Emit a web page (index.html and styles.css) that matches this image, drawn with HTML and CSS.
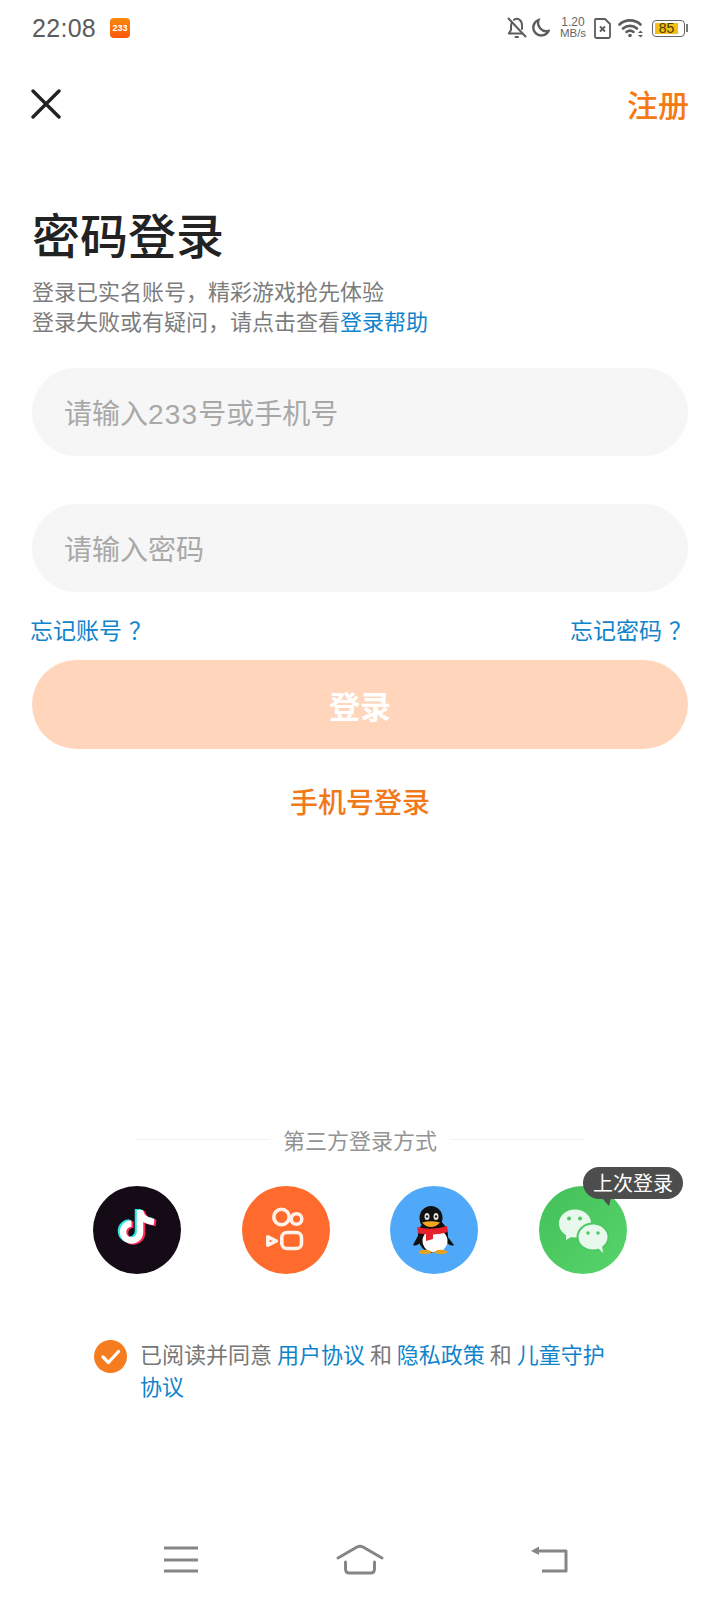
FILE: index.html
```html
<!DOCTYPE html>
<html lang="zh-CN">
<head>
    <meta charset="UTF-8">
    <meta name="viewport" content="width=device-width, initial-scale=1.0">
    <title>密码登录</title>
    <link rel="stylesheet" href="styles.css">
</head>
<body>
<div class="page">
    <!-- status bar -->
    <div class="status">
        <span class="time">22:08</span>
        <span class="app-badge">233</span>
        <div class="status-icons">
            <svg class="ic" width="20" height="22" viewBox="0 0 20 22" fill="none" stroke="#5c5c5c" stroke-width="2" stroke-linecap="round" stroke-linejoin="round">
                <path d="M5 5.500C4.200 6.800 4 8 4 9.500V13L1.800 16.500H15"/>
                <path d="M7 2.800C8.600 1.600 11 1.600 12.600 2.800 14.400 4 15 6 15 8.500V12"/>
                <path d="M1.500 1.500L18.500 19.500"/>
                <path d="M8.500 20H11"/>
            </svg>
            <svg class="ic" width="20" height="20" viewBox="0 0 20 20" fill="none" stroke="#5c5c5c" stroke-width="2.400" stroke-linecap="round">
                <path d="M8.500 2A8 8 0 1 0 18.500 13 8.500 8.500 0 0 1 8.500 2Z"/>
            </svg>
            <div class="speed"><span>1.20</span><span class="speed-unit">MB/s</span></div>
            <svg class="ic" width="17" height="21" viewBox="0 0 17 21" fill="none" stroke="#5c5c5c" stroke-width="1.800" stroke-linejoin="round">
                <path d="M2 1H11L16 6V18.500A1.500 1.500 0 0 1 14.500 20H2.500A1.500 1.500 0 0 1 1 18.500V2A1 1 0 0 1 2 1Z"/>
                <path d="M6 8.500L11 13.500M11 8.500L6 13.500"/>
            </svg>
            <svg class="ic" width="26" height="20" viewBox="0 0 26 20" fill="none" stroke="#5c5c5c" stroke-width="2.600" stroke-linecap="round">
                <path d="M1.500 6.500C7 1 17 1 22.500 6.500"/>
                <path d="M5 10.500C9 7 15 7 19 10.500"/>
                <path d="M8.500 14C10.500 12.500 13.500 12.500 15.500 14"/>
                <circle cx="12" cy="17.500" r="1.800" fill="#5c5c5c" stroke="none"/>
                <path d="M22.500 12.500L25 15H20ZM22.500 19.500L25 17H20Z" fill="#5c5c5c" stroke="none"/>
            </svg>
            <div class="battery">
                <div class="battery-body"><span class="battery-level">85</span></div>
                <div class="battery-nub"></div>
            </div>
        </div>
    </div>

    <div class="topbar">
        <svg width="30" height="30" viewBox="0 0 30 30" fill="none" stroke="#222" stroke-width="3.400" stroke-linecap="round">
            <path d="M2 2L28 28M28 2L2 28"/>
        </svg>
        <span class="register">注册</span>
    </div>

    <div class="form">
        <h1 class="title">密码登录</h1>
        <p class="sub">登录已实名账号，精彩游戏抢先体验<br>登录失败或有疑问，请点击查看<span class="link">登录帮助</span></p>
        <div class="field field-account">请输入<span class="digits">233</span>号或手机号</div>
        <div class="field field-password">请输入密码</div>
        <div class="forgot">
            <span class="link">忘记账号<span class="qmark">？</span></span>
            <span class="link">忘记密码<span class="qmark">？</span></span>
        </div>
        <div class="login-btn">登录</div>
        <div class="phone-login">手机号登录</div>
    </div>

    <div class="third">
        <div class="divider">
            <span class="divider-line"></span>
            <span>第三方登录方式</span>
            <span class="divider-line"></span>
        </div>
        <div class="socials">
            <div class="social tiktok">
                <svg width="88" height="88" viewBox="0 0 88 88" fill="none" stroke-width="6.500">
                    <path d="M47 24V46A8.500 8.500 0 1 1 38.500 37.500M47 25C48 31 53 35 61 36" stroke="#25e6e2" transform="translate(-2 -1)"/>
                    <path d="M47 24V46A8.500 8.500 0 1 1 38.500 37.500M47 25C48 31 53 35 61 36" stroke="#ff2a5c" transform="translate(2 1)"/>
                    <path d="M47 24V46A8.500 8.500 0 1 1 38.500 37.500M47 25C48 31 53 35 61 36" stroke="#fff"/>
                </svg>
            </div>
            <div class="social kuaishou">
                <svg width="88" height="88" viewBox="0 0 88 88" fill="none" stroke="#fff2ea" stroke-width="3.600" stroke-linejoin="round">
                    <circle cx="39.500" cy="31" r="7.700"/>
                    <circle cx="54.500" cy="33" r="5.300"/>
                    <rect x="39.800" y="46.500" width="19.700" height="16" rx="5"/>
                    <path d="M25.800 50.800L34.300 55 25.800 59.200Z"/>
                </svg>
            </div>
            <div class="social qq">
                <svg width="88" height="88" viewBox="0 0 88 88">
                    <path d="M30 46L23 59Q26 61 31 56ZM54 46L64 59Q61 61 56 56Z" fill="#111"/>
                    <ellipse cx="43" cy="50" rx="15" ry="17" fill="#111"/>
                    <ellipse cx="41" cy="32" rx="11.500" ry="12" fill="#111"/>
                    <ellipse cx="45" cy="55" rx="12.500" ry="11.500" fill="#fff"/>
                    <ellipse cx="37" cy="30.500" rx="2.500" ry="3.500" fill="#e4e4e4"/>
                    <ellipse cx="46" cy="30.500" rx="2.500" ry="3.500" fill="#e4e4e4"/>
                    <circle cx="37" cy="30.500" r="1.200" fill="#222"/>
                    <circle cx="46" cy="30.500" r="1.200" fill="#222"/>
                    <path d="M32 36.500Q41 34 50 36.500 46 41 41 41 36 41 32 36.500Z" fill="#f4a623"/>
                    <path d="M27 41Q42 45 57 40L58 46Q51 48 43 48.500V53L36 55V48Q30 48 28 47Z" fill="#e8222c"/>
                    <ellipse cx="35" cy="66" rx="6.500" ry="2.200" fill="#e3a21f"/>
                    <ellipse cx="51" cy="66" rx="6.500" ry="2.200" fill="#e3a21f"/>
                </svg>
            </div>
            <div class="social wechat">
                <svg width="88" height="88" viewBox="0 0 88 88">
                    <path d="M27 47L27 54 34 50Z" fill="#e9f8ec"/>
                    <ellipse cx="36" cy="37.500" rx="16" ry="14" fill="#e9f8ec"/>
                    <circle cx="30" cy="32.500" r="2" fill="#4cc864"/>
                    <circle cx="41" cy="32.500" r="2" fill="#4cc864"/>
                    <ellipse cx="54" cy="51" rx="15.500" ry="13.500" fill="#e9f8ec" stroke="#4cc864" stroke-width="2"/>
                    <path d="M59 62L64 67 63 59Z" fill="#e9f8ec"/>
                    <circle cx="49" cy="47" r="1.800" fill="#4cc864"/>
                    <circle cx="59" cy="47" r="1.800" fill="#4cc864"/>
                </svg>
                <div class="last-login">上次登录</div>
            </div>
        </div>
        <div class="agree">
            <svg class="agree-check" width="33" height="33" viewBox="0 0 33 33">
                <circle cx="16.500" cy="16.500" r="16.500" fill="#f57c1f"/>
                <path d="M9 17L14.500 22.500 24.500 11.500" fill="none" stroke="#fff" stroke-width="3.200" stroke-linecap="round" stroke-linejoin="round"/>
            </svg>
            <p class="agree-text">已阅读并同意 <span class="link">用户协议</span> 和 <span class="link">隐私政策</span> 和 <span class="link">儿童守护</span><br><span class="link">协议</span></p>
        </div>
    </div>

    <!-- navigation keys -->
    <div class="navkeys">
        <svg width="70" height="34" viewBox="0 0 70 34" fill="none" stroke="#868686" stroke-width="3">
            <path d="M18 5H52M18 17H52M18 28H52"/>
        </svg>
        <svg width="70" height="34" viewBox="0 0 70 34" fill="none" stroke="#868686" stroke-width="3" stroke-linecap="round" stroke-linejoin="round">
            <path d="M13 15L32 4Q35 2.500 38 4L57 15"/>
            <path d="M20.500 19V26Q20.500 30 24.500 30H45.500Q49.500 30 49.500 26V19"/>
        </svg>
        <svg width="70" height="34" viewBox="0 0 70 34" fill="none" stroke="#868686" stroke-width="3" stroke-linejoin="round">
            <path d="M34 8H62V28H38"/>
            <path d="M35 3.500V12L27 8Z" fill="#868686" stroke="none"/>
        </svg>
    </div>
</div>
</body>
</html>
```
FILE: styles.css
```css
* {
    box-sizing: border-box;
}
body {
    margin: 0;
    background: #fff;
    font-family: "Noto Sans CJK SC", "Noto Sans", sans-serif;
}
p, h1 {
    margin: 0;
}
.page {
    width: 720px;
    height: 1600px;
    display: flex;
    flex-direction: column;
    overflow: hidden;
}
.link {
    color: #0f84cc;
}

/* status bar */
.status {
    height: 56px;
    padding: 0 32px;
    display: flex;
    align-items: center;
    color: #5c5c5c;
}
.time {
    font-family: "Liberation Sans", sans-serif;
    font-size: 25px;
    letter-spacing: 0.3px;
}
.app-badge {
    width: 20px;
    height: 20px;
    margin-left: 14px;
    border-radius: 4px;
    background: linear-gradient(#f98a0c, #f9560c);
    color: #fff;
    font-family: "Liberation Sans", sans-serif;
    font-size: 9px;
    font-weight: bold;
    line-height: 20px;
    text-align: center;
}
.status-icons {
    margin-left: auto;
    display: flex;
    align-items: center;
}
.ic {
    display: block;
}
.status-icons .ic:nth-child(2) {
    margin-left: 3px;
}
.speed {
    width: 26px;
    margin-left: 10px;
    display: flex;
    flex-direction: column;
    align-items: center;
    color: #666;
    font-family: "Liberation Sans", sans-serif;
    font-size: 12px;
    line-height: 11px;
}
.speed-unit {
    font-size: 11.500px;
    line-height: 11px;
}
.status-icons .ic:nth-child(4) {
    margin-left: 8px;
}
.status-icons .ic:nth-child(5) {
    margin-left: 7px;
}
.battery {
    margin-left: 8px;
    display: flex;
    align-items: center;
}
.battery-body {
    width: 33px;
    height: 17px;
    padding: 2px;
    border: 1.500px solid #666;
    border-radius: 4px;
}
.battery-level {
    display: block;
    width: 23px;
    height: 100%;
    background: #f2c014;
    color: #4a3c08;
    font-family: "Liberation Sans", sans-serif;
    font-size: 14px;
    line-height: 11px;
    text-align: center;
}
.battery-nub {
    width: 2px;
    height: 8px;
    margin-left: 1px;
    background: #777;
}

/* header */
.topbar {
    height: 74px;
    margin-top: 11px;
    padding: 0 31px;
    display: flex;
    align-items: center;
    justify-content: space-between;
}
.register {
    margin-top: -2px;
    color: #f57a14;
    font-size: 31px;
    font-weight: 500;
}

/* login form */
.form {
    padding: 0 32px;
}
.title {
    margin-top: 62px;
    color: #222;
    font-size: 48px;
    font-weight: 500;
    line-height: 60px;
}
.sub {
    margin-top: 12px;
    color: #7c7c7c;
    font-size: 22px;
    line-height: 30px;
}
.field {
    height: 88px;
    padding-left: 32px;
    border-radius: 44px;
    background: #f6f6f6;
    color: #a8a8a8;
    font-size: 28px;
    line-height: 88px;
}
.digits {
    font-family: "Liberation Sans", sans-serif;
    letter-spacing: 1.200px;
}
.field-account {
    margin-top: 33px;
}
.field-password {
    margin-top: 48px;
}
.forgot {
    height: 30px;
    margin: 22px -4px 0 -2px;
    display: flex;
    justify-content: space-between;
    font-size: 23px;
    line-height: 30px;
    white-space: nowrap;
}
/* question mark stands a little off the word */
.qmark {
    padding-left: 7px;
}
.login-btn {
    height: 89px;
    margin-top: 16px;
    border-radius: 45px;
    background: #ffd6bb;
    color: #fff;
    font-size: 31px;
    font-weight: 700;
    line-height: 89px;
    text-align: center;
}
.phone-login {
    margin-top: 32px;
    color: #f0791a;
    font-size: 28px;
    font-weight: 500;
    line-height: 40px;
    text-align: center;
}

/* third party logins */
.third {
    margin-top: auto;
}
.divider {
    display: flex;
    align-items: center;
    justify-content: center;
    gap: 13px;
    color: #939393;
    font-size: 22px;
    line-height: 30px;
}
.divider-line {
    width: 135px;
    height: 1px;
    background: #f3f3f3;
}
.socials {
    margin-top: 32px;
    display: flex;
    justify-content: center;
    gap: 60.600px;
}
.social {
    position: relative;
    width: 88px;
    height: 88px;
    border-radius: 50%;
}
.social svg {
    display: block;
}
.tiktok {
    background: #140b16;
}
.kuaishou {
    background: #ff6b2c;
}
.qq {
    background: #4fa8f8;
}
.wechat {
    background: linear-gradient(135deg, #44c05a, #58d46c);
}
.last-login {
    position: absolute;
    left: 44px;
    top: -19px;
    width: 100px;
    height: 32px;
    border-radius: 16px;
    background: #4d4d4d;
    color: #fff;
    font-size: 20px;
    line-height: 31px;
    text-align: center;
}
.last-login::after {
    content: "";
    position: absolute;
    left: 18px;
    top: 30px;
    border-top: 9px solid #4d4d4d;
    border-left: 8px solid transparent;
    border-right: 2px solid transparent;
}
.agree {
    margin-top: 66px;
    padding-left: 94px;
    display: flex;
    align-items: flex-start;
    gap: 13px;
}
.agree-check {
    flex: none;
    display: block;
}
.agree-text {
    width: 480px;
    margin-top: -3px;
    color: #767676;
    font-size: 22px;
    line-height: 32px;
}

/* navigation keys */
.navkeys {
    height: 80px;
    margin-top: 119px;
    display: flex;
    justify-content: center;
    gap: 109px;
    padding-top: 23px;
}
.navkeys svg {
    display: block;
}
```
